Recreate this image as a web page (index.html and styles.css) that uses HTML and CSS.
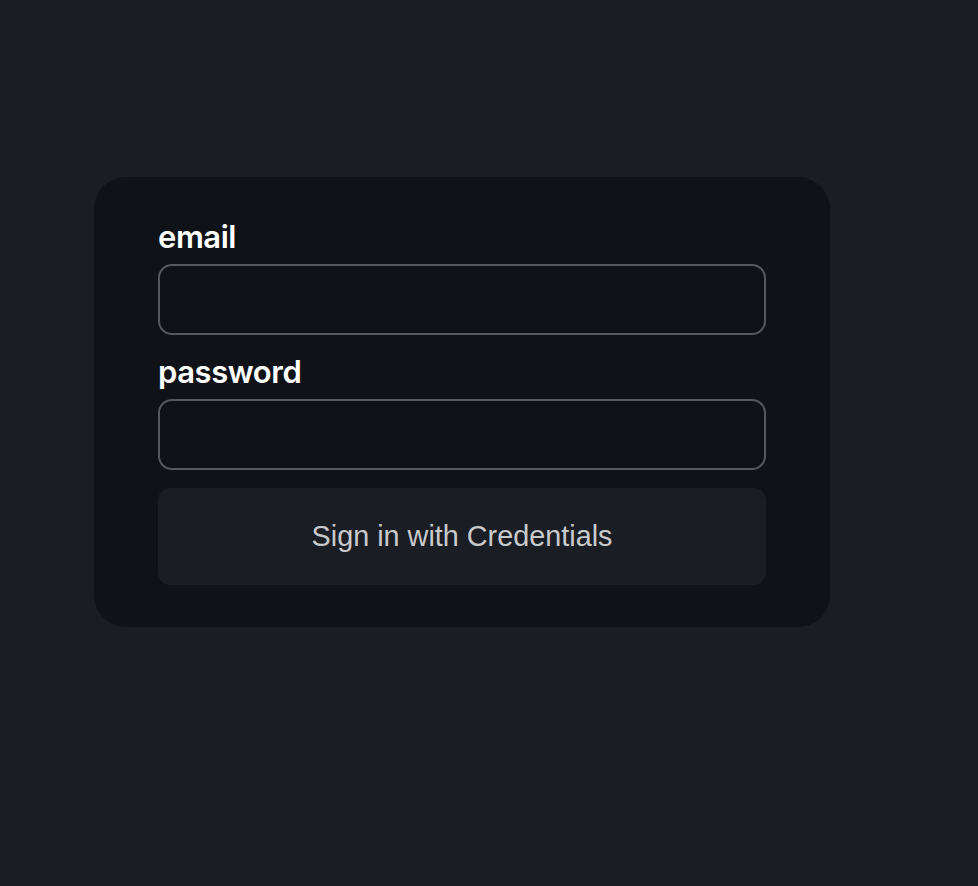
FILE: index.html
```html
<!DOCTYPE html>
<html lang="en">
<head>
<meta charset="utf-8">
<title>Sign in</title>
<link rel="stylesheet" href="styles.css">
</head>
<body>
<main class="page">
  <form class="card">
    <label class="field-label" for="email">email</label>
    <input class="field-input" id="email" type="email">
    <label class="field-label label-gap" for="password">password</label>
    <input class="field-input" id="password" type="password">
    <button class="submit" type="button">Sign in with Credentials</button>
  </form>
</main>
</body>
</html>
```

FILE: styles.css
```css
html, body {
  margin: 0;
  padding: 0;
  background: #1a1d23;
}
.page {
  min-height: 886px;
  padding: 177px 0 0 94px;
  box-sizing: border-box;
}
.card {
  width: 736px;
  box-sizing: border-box;
  padding: 42px 64px 42px;
  background: #0f1216;
  border-radius: 32px;
  display: flex;
  flex-direction: column;
}
.field-label {
  font-family: Inter, "Noto Sans", sans-serif;
  font-weight: 600;
  font-size: 31px;
  line-height: 36px;
  color: #ffffff;
  margin-bottom: 9px;
  letter-spacing: -0.45px;
}
.label-gap {
  margin-top: 19px;
}
.field-input {
  height: 71px;
  box-sizing: border-box;
  border: 2px solid #55585e;
  border-radius: 14px;
  background: #0e1115;
  color: #fff;
  font-size: 24px;
  padding: 0 16px;
  outline: none;
}
.submit {
  margin-top: 18px;
  height: 97px;
  border: 1px solid #1c1f25;
  border-radius: 12px;
  background: #1a1d23;
  color: #c9cacc;
  font-family: "Liberation Sans", Arial, sans-serif;
  font-size: 28.8px;
  cursor: pointer;
}
```
